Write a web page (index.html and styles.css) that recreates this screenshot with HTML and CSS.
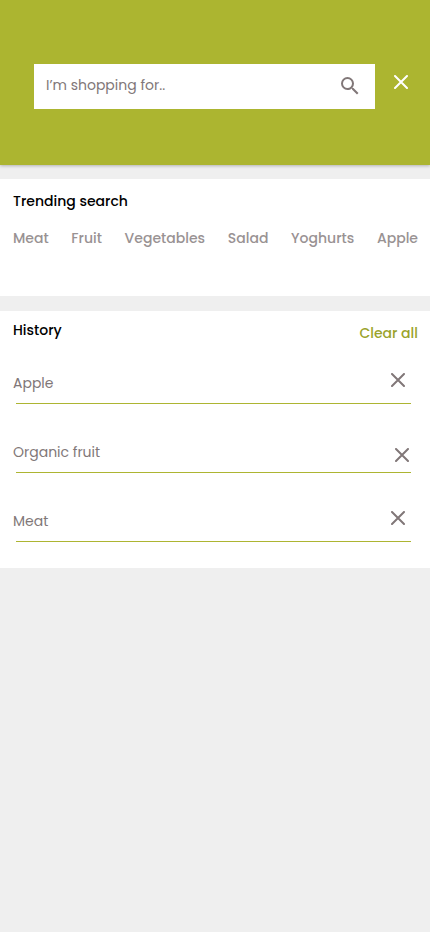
FILE: index.html
```html
<!DOCTYPE html>
<html lang="en">
<head>
<meta charset="utf-8">
<meta name="viewport" content="width=device-width, initial-scale=1">
<title>Search</title>
<link rel="stylesheet" href="styles.css">
</head>
<body>
<header class="top">
  <form class="search" role="search">
    <input class="search-input" type="text" aria-label="Search products" placeholder="I’m shopping for..">
    <button class="search-button" type="submit" aria-label="Search">
      <svg width="24" height="24" viewBox="0 0 24 24" fill="currentColor"><path d="M15.5 14h-.79l-.28-.27A6.47 6.47 0 0 0 16 9.5 6.5 6.5 0 1 0 9.5 16c1.61 0 3.09-.59 4.23-1.57l.27.28v.79l5 4.99L20.49 19zm-6 0a4.5 4.5 0 1 1 0-9 4.5 4.5 0 0 1 0 9z"/></svg>
    </button>
  </form>
  <button class="icon-button close" type="button" aria-label="Close">
    <svg class="cross" viewBox="0 0 14 14"><path d="M1 1l12 12M13 1L1 13"/></svg>
  </button>
</header>
<main>
  <section class="panel trending">
    <h2 class="title">Trending search</h2>
    <nav class="tags" aria-label="Trending search">
      <a href="#meat">Meat</a>
      <a href="#fruit">Fruit</a>
      <a href="#vegetables">Vegetables</a>
      <a href="#salad">Salad</a>
      <a href="#yoghurts">Yoghurts</a>
      <a href="#apple">Apple</a>
    </nav>
  </section>
  <section class="panel history">
    <div class="history-head">
      <h2 class="title">History</h2>
      <button class="clear" type="button">Clear all</button>
    </div>
    <ul class="list">
      <li class="item">
        <div class="row"><span>Apple</span>
          <button class="icon-button" type="button" aria-label="Remove Apple"><svg class="cross" viewBox="0 0 14 14"><path d="M1 1l12 12M13 1L1 13"/></svg></button>
        </div>
      </li>
      <li class="item">
        <div class="row row-low"><span>Organic fruit</span>
          <button class="icon-button" type="button" aria-label="Remove Organic fruit"><svg class="cross" viewBox="0 0 14 14"><path d="M1 1l12 12M13 1L1 13"/></svg></button>
        </div>
      </li>
      <li class="item">
        <div class="row"><span>Meat</span>
          <button class="icon-button" type="button" aria-label="Remove Meat"><svg class="cross" viewBox="0 0 14 14"><path d="M1 1l12 12M13 1L1 13"/></svg></button>
        </div>
      </li>
    </ul>
  </section>
</main>
</body>
</html>
```
FILE: styles.css
```css
* {
  box-sizing: border-box;
}

body {
  margin: 0;
  background: #efefef;
  color: #817778;
  font: 400 14px/20px Poppins, Inter, sans-serif;
}

button,
input {
  margin: 0;
  padding: 0;
  border: 0;
  background: none;
  color: inherit;
  font: inherit;
}

button {
  cursor: pointer;
}

svg {
  display: block;
}

.top {
  display: flex;
  align-items: flex-start;
  gap: 19px;
  padding: 64px 22px 56px 34px;
  background: #acb530;
  box-shadow: 0 1px 3px rgba(0, 0, 0, 0.25);
}

.search {
  display: flex;
  flex: 1;
  align-items: flex-start;
  min-width: 0;
  padding: 0 13px 0 12px;
  background: #fff;
}

.search-input {
  flex: 1;
  min-width: 0;
  height: 45px;
  padding-bottom: 2px;
  outline: 0;
}

.search-input::placeholder {
  color: #817778;
  opacity: 1;
}

.search-button {
  padding: 10px 0;
}

.icon-button {
  flex: none;
  width: 14px;
}

.cross {
  width: 14px;
  height: 14px;
  fill: none;
  stroke: currentColor;
  stroke-width: 2;
  stroke-linecap: round;
}

.close {
  padding: 11px 0;
  color: #fff;
}

.panel {
  background: #fff;
}

.title {
  margin: 0;
  color: #000;
  font-size: 14px;
  font-weight: 500;
}

.trending {
  margin-top: 14px;
  padding: 12px 12px 48px 13px;
}

.tags {
  display: flex;
  justify-content: space-between;
  margin-top: 17px;
}

.tags a {
  color: #999293;
  font-weight: 500;
  text-decoration: none;
}

.history {
  margin-top: 15px;
  padding: 9px 0 26px;
}

.history-head {
  display: flex;
  align-items: flex-start;
  justify-content: space-between;
  padding: 0 12px 0 13px;
}

.clear {
  color: #9aa32c;
  font-weight: 500;
  line-height: 26px;
}

.list {
  display: grid;
  gap: 38px;
  margin: 27px 0 0;
  padding: 0;
  list-style: none;
}

.item::after {
  content: "";
  display: block;
  height: 1px;
  margin: 10px 19px 0 16px;
  background: #adb532;
}

.row {
  display: flex;
  align-items: flex-start;
  justify-content: space-between;
  padding: 0 25px 0 13px;
}

.row-low {
  align-items: flex-end;
  padding-right: 21px;
}
```
